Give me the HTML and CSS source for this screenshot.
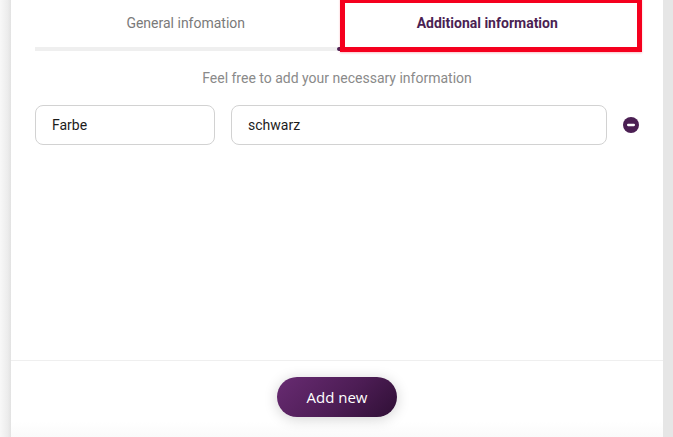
FILE: index.html
```html
<!DOCTYPE html>
<html>
<head>
<meta charset="utf-8">
<link rel="stylesheet" href="styles.css">
</head>
<body>
<div class="gutter-left"></div>
<div class="card">
  <div class="content">
    <div class="tabs">
      <div class="tab">General infomation</div>
      <div class="tab active">Additional information</div>
    </div>
    <div class="tab-bar">
      <div class="bar-half"></div>
      <div class="bar-half active"></div>
    </div>
    <p class="hint">Feel free to add your necessary information</p>
    <div class="row">
      <div class="field key">Farbe</div>
      <div class="field value">schwarz</div>
      <button class="remove" aria-label="remove">
        <svg width="16" height="16" viewBox="0 0 16 16"><circle cx="8" cy="8" r="8" fill="#4b1f53"/><rect x="4" y="6.8" width="8" height="2.4" rx="1.1" fill="#fff"/></svg>
      </button>
    </div>
    <div class="highlight"></div>
  </div>
  <div class="footer">
    <button class="add-btn">Add new</button>
  </div>
</div>
<div class="gutter-right"></div>
</body>
</html>
```
FILE: styles.css
```css
* { box-sizing: border-box; }
html, body { margin: 0; height: 100%; }
body {
  display: flex;
  background: #e6e6e6;
  font-family: Roboto, "Liberation Sans", sans-serif;
  overflow: hidden;
}
.gutter-left {
  width: 11px;
  flex: none;
  background: linear-gradient(to right, #f8f8f8, #ececec 70%, #e2e2e2);
}
.gutter-right {
  width: 10px;
  flex: none;
  background: #e6e6e6;
}
.card {
  flex: 1;
  background: #fff;
  display: flex;
  flex-direction: column;
  height: 100%;
}
.content {
  position: relative;
  flex: 1;
  padding: 0 24px 0 24px;
}
.tabs {
  display: flex;
  height: 47px;
  margin-right: 1px;
}
.tab {
  flex: 1;
  display: flex;
  align-items: center;
  justify-content: center;
  font-size: 14px;
  color: #7a7a7a;
  padding-bottom: 1px;
}
.tab.active {
  color: #4b1f53;
  font-weight: 700;
}
.tab-bar {
  display: flex;
  height: 4px;
  margin-right: 1px;
}
.bar-half {
  flex: 1;
  background: #efefef;
}
.bar-half.active {
  background: #4b1f53;
  border-radius: 2px;
}
.hint {
  margin: 19px 0 0;
  text-align: center;
  font-size: 14px;
  color: #8a8a8a;
  line-height: 16px;
}
.row {
  display: flex;
  align-items: center;
  margin-top: 19px;
  gap: 16px;
}
.field {
  height: 40px;
  border: 1px solid #d2d2d2;
  border-radius: 8px;
  padding: 0 16px;
  display: flex;
  align-items: center;
  font-size: 14px;
  color: #1c1c1c;
}
.field.key { width: 180px; }
.field.value { flex: 1; }
.remove {
  border: 0;
  background: none;
  padding: 0;
  width: 16px;
  height: 16px;
  display: flex;
}
.highlight {
  position: absolute;
  left: 329px;
  top: -2px;
  width: 302px;
  height: 54px;
  border: 5px solid #f5001e;
  box-shadow: 0 1px 2px rgba(245, 0, 30, 0.25);
}
.footer {
  height: 77px;
  border-top: 1px solid #efefef;
  display: flex;
  justify-content: center;
  padding-top: 16px;
  background: linear-gradient(to bottom, #fff 80%, #fafafa);
}
.add-btn {
  width: 120px;
  height: 40px;
  border: 0;
  border-radius: 20px;
  background: linear-gradient(135deg, #682b72, #4d1d55 55%, #2f0f35);
  color: #fff;
  font-family: "Open Sans", sans-serif;
  font-size: 15px;
  box-shadow: 0 2px 14px rgba(0, 0, 0, 0.18);
}
```
